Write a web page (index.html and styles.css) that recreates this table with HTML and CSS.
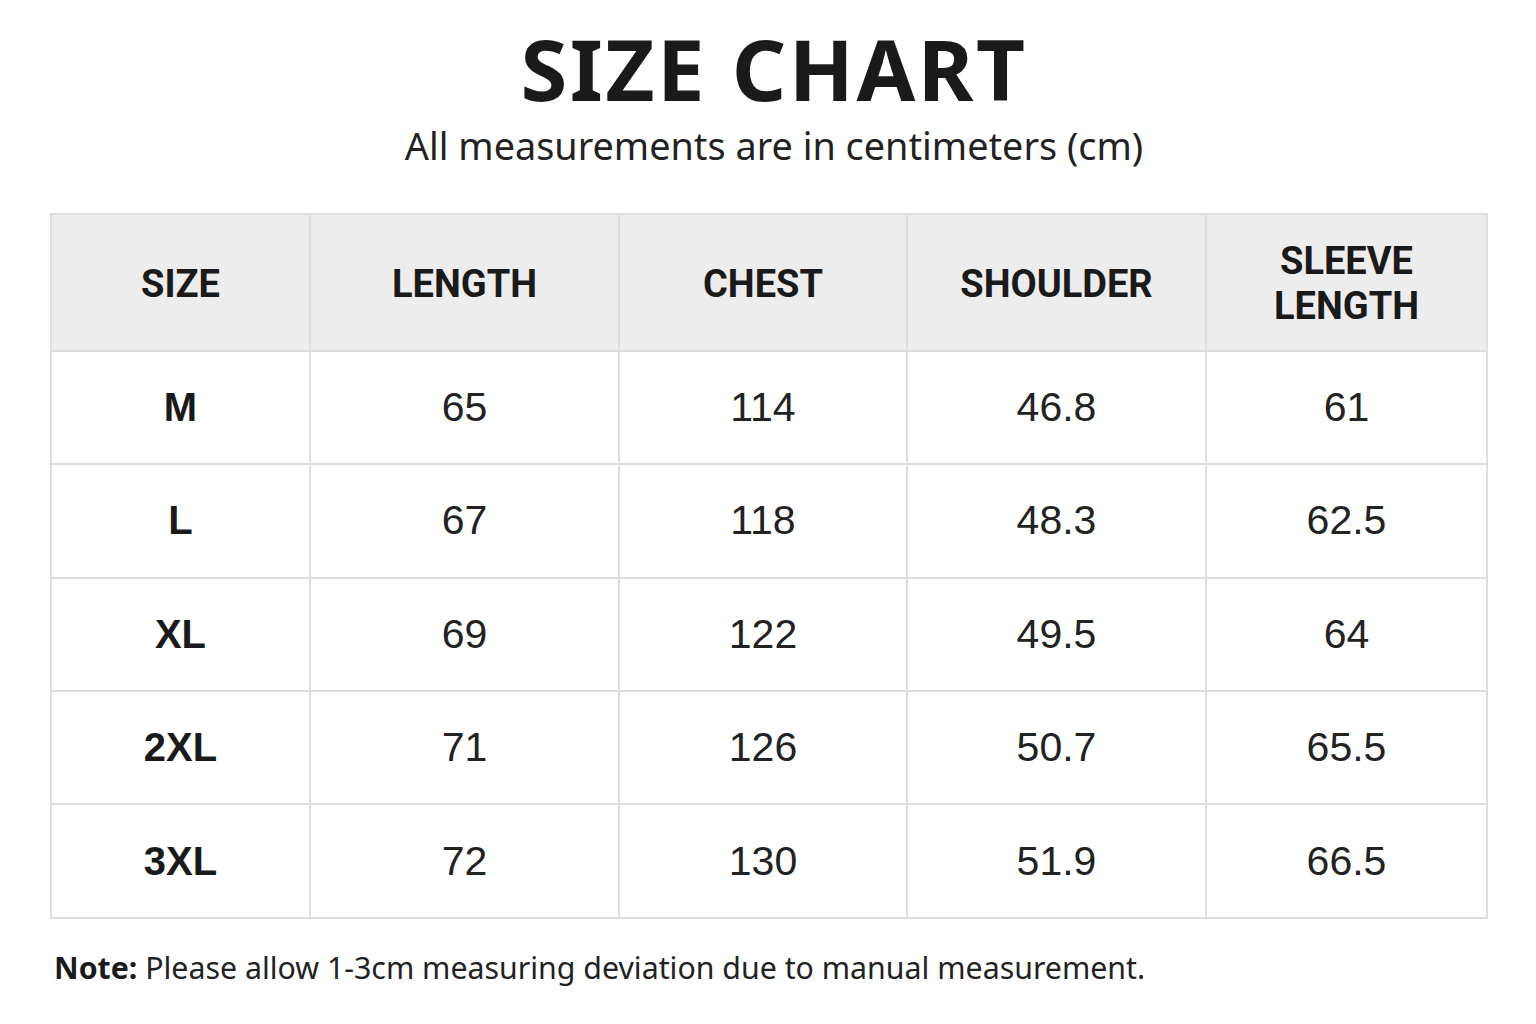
FILE: index.html
```html
<!DOCTYPE html>
<html lang="en">
<head>
<meta charset="utf-8">
<title>Size Chart</title>
<link rel="stylesheet" href="styles.css">
</head>
<body>
<main class="page">
  <h1 class="title">SIZE CHART</h1>
  <p class="subtitle">All measurements are in centimeters (cm)</p>
  <table class="chart">
    <colgroup>
      <col class="c1"><col class="c2"><col class="c3"><col class="c4"><col class="c5">
    </colgroup>
    <thead>
      <tr>
        <th>SIZE</th>
        <th>LENGTH</th>
        <th>CHEST</th>
        <th>SHOULDER</th>
        <th>SLEEVE<br>LENGTH</th>
      </tr>
    </thead>
    <tbody>
      <tr><td class="size">M</td><td>65</td><td>114</td><td>46.8</td><td>61</td></tr>
      <tr><td class="size">L</td><td>67</td><td>118</td><td>48.3</td><td>62.5</td></tr>
      <tr><td class="size">XL</td><td>69</td><td>122</td><td>49.5</td><td>64</td></tr>
      <tr><td class="size">2XL</td><td>71</td><td>126</td><td>50.7</td><td>65.5</td></tr>
      <tr><td class="size">3XL</td><td>72</td><td>130</td><td>51.9</td><td>66.5</td></tr>
    </tbody>
  </table>
  <p class="note"><strong>Note:</strong> Please allow 1-3cm measuring deviation due to manual measurement.</p>
</main>
</body>
</html>
```

FILE: styles.css
```css
html, body {
  margin: 0;
  padding: 0;
  background: #ffffff;
}

.page {
  width: 1536px;
  height: 1024px;
  box-sizing: border-box;
  padding: 26px 50px 0 50px;
  display: flex;
  flex-direction: column;
  font-family: "Noto Sans", "Open Sans", sans-serif;
  color: #1c1c1c;
}

.title {
  margin: 0;
  padding-left: 12px;
  font-size: 85px;
  line-height: 1;
  font-weight: 700;
  letter-spacing: 2.5px;
  text-align: center;
  color: #1a1a1a;
}

.subtitle {
  margin: 16px 0 0 0;
  padding-left: 12px;
  font-size: 37.8px;
  line-height: 1;
  text-align: center;
  color: #222222;
}

.chart {
  margin-top: 48px;
  width: 1436px;
  border-collapse: collapse;
  table-layout: fixed;
  border: 2px solid #dcdcdc;
}

.c1 { width: 259px; }
.c2 { width: 309px; }
.c3 { width: 288px; }
.c4 { width: 299px; }
.c5 { width: 281px; }

.chart th,
.chart td {
  border: 2px solid #dedede;
  text-align: center;
  vertical-align: middle;
  padding: 0;
}

.chart th {
  height: 131px;
  padding-top: 4px;
  background: #ededed;
  font-family: "Roboto", "Liberation Sans", sans-serif;
  font-weight: 700;
  font-size: 38px;
  line-height: 45px;
  color: #1a1a1a;
}

.chart td {
  height: 111.4px;
  font-family: "Liberation Sans", "Arial", sans-serif;
  font-size: 41px;
  font-weight: 400;
  color: #222222;
}

.chart td.size {
  font-weight: 700;
  font-size: 40px;
  color: #1a1a1a;
}

.note {
  margin: 34px 0 0 4px;
  font-size: 30.3px;
  line-height: 1;
  color: #222222;
}

.note strong {
  font-weight: 700;
  color: #1a1a1a;
}
```
